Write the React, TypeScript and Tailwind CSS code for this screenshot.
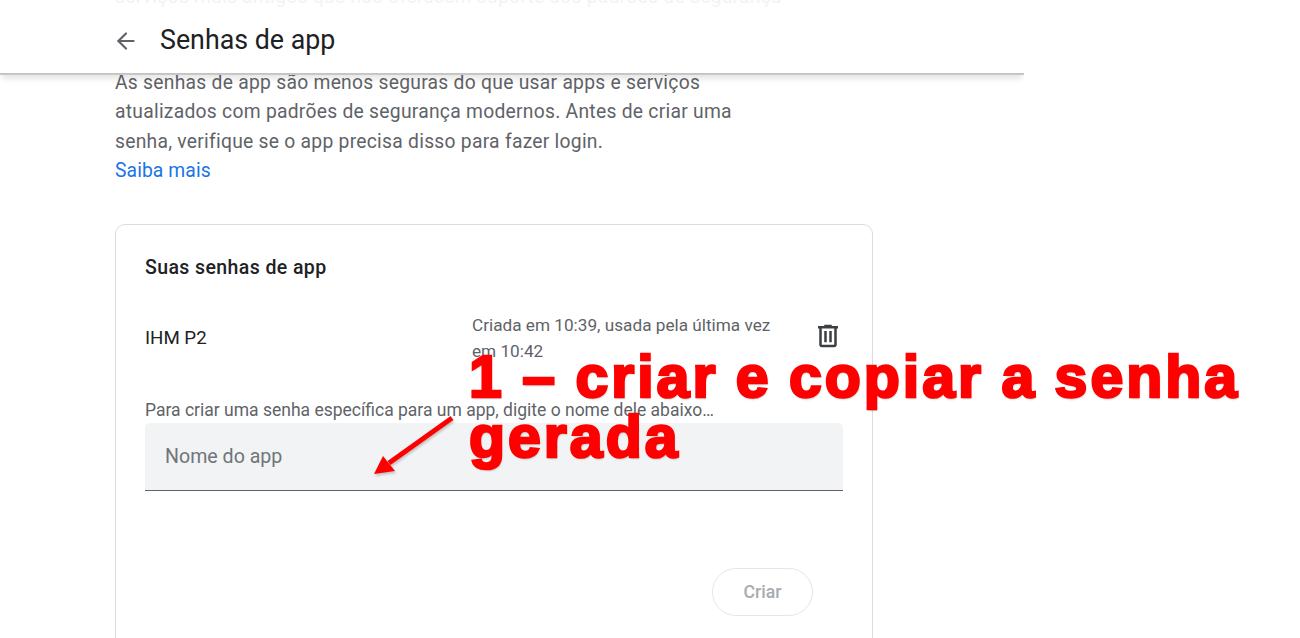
import { ArrowLeft } from 'lucide-react';

function TrashIcon() {
  return (
    <svg viewBox="0 0 24 24" className="h-[30px] w-[30px]" fill="#3c4043">
      <path d="M15 4V3H9v1H4v2h1v13c0 1.1.9 2 2 2h10c1.1 0 2-.9 2-2V6h1V4h-5zm2 15H7V6h10v13z" />
      <path d="M9 8h2v9H9zm4 0h2v9h-2z" />
    </svg>
  );
}

function Annotation() {
  return (
    <div className="absolute left-[469px] top-[347px] text-[59px] leading-[60px] font-bold text-[#ff0000] [font-family:'Liberation_Sans',sans-serif] [text-shadow:1px_2px_2px_rgba(0,0,0,0.2)] [-webkit-text-stroke:2.6px_#ff0000]">
      <div className="whitespace-nowrap tracking-[3px] [word-spacing:-2px]">1 – criar e copiar a senha</div>
      <div className="whitespace-nowrap tracking-[3px]">gerada</div>
    </div>
  );
}

function Arrow() {
  return (
    <svg className="absolute left-[370px] top-[415px] h-[64px] w-[90px] [filter:drop-shadow(1px_2px_1px_rgba(0,0,0,0.2))]" viewBox="0 0 90 64">
      <line x1="82" y1="3" x2="19" y2="48" stroke="#ff0000" strokeWidth="5" />
      <polygon points="4,59 13,41 25,56" fill="#ff0000" />
    </svg>
  );
}

export default function App() {
  return (
    <div className="relative h-[638px] w-[1300px] overflow-hidden bg-white [font-family:Roboto,sans-serif]">
      {/* page content, scrolled under the header */}
      <main className="pl-[115px] pt-[68px]">
        <div className="w-[640px] text-[19.3px] leading-[29.3px] tracking-[0.26px] text-[#5f6368]">
          <p>
            As senhas de app são menos seguras do que usar apps e serviços atualizados com padrões de segurança modernos. Antes de criar uma senha, verifique se o app precisa disso para fazer login.
          </p>
          <a className="tracking-[0.1px] text-[#1a73e8]">Saiba mais</a>
        </div>

        <section className="mt-[39px] h-[500px] w-[758px] rounded-[10px] border border-[#dadce0] px-[29px] pt-[30px]">
          <h2 className="text-[19.5px] leading-[26px] font-medium tracking-[0.4px] text-[#202124]">Suas senhas de app</h2>

          <div className="mt-[32px] flex items-start">
            <div className="w-[327px] pt-[12px] text-[18.7px] leading-[26px] text-[#202124]">IHM P2</div>
            <div className="w-[310px] text-[17.2px] leading-[25.5px] text-[#5f6368]">
              Criada em 10:39, usada pela última vez em 10:42
            </div>
            <div className="ml-[31px] pt-[8px]">
              <TrashIcon />
            </div>
          </div>

          <p className="mt-[34px] whitespace-nowrap text-[17.5px] leading-[24px] text-[#5f6368]">
            Para criar uma senha específica para um app, digite o nome dele abaixo…
          </p>

          <div className="mt-[1px] flex h-[68px] w-[698px] items-center rounded-t-[5px] border-b border-[#5f6368] bg-[#f1f3f4] pl-[20px] text-[19.6px] text-[#70757a]">
            Nome do app
          </div>

          <div className="mt-[77px] flex w-[668px] justify-end">
            <div className="flex h-[48px] w-[101px] items-center justify-center rounded-full border border-[#e6e6e6] text-[17.6px] font-medium text-[#a8abaf]">
              Criar
            </div>
          </div>
        </section>
      </main>

      {/* leftover of the line scrolled past, fading out at the very top */}
      <div className="absolute left-[115px] top-[-15px] whitespace-nowrap text-[19.4px] leading-[24px] tracking-[0.2px] text-[#f3f3f3]">
        serviços mais antigos que não oferecem suporte aos padrões de segurança
      </div>

      {/* sticky header */}
      <header className="absolute left-0 top-[8px] flex h-[65px] w-[1024px] items-center bg-white shadow-[0_1px_0_#c4c4c4,0_2px_0_#c8c8c8,0_8px_6px_-2px_rgba(0,0,0,0.1)] [clip-path:inset(0_0_-14px_0)]">
        <ArrowLeft className="ml-[113px] h-[26px] w-[26px] text-[#5f6368]" strokeWidth={2} />
        <h1 className="ml-[21px] text-[26.8px] text-[#202124]">Senhas de app</h1>
      </header>

      <Arrow />
      <Annotation />
    </div>
  );
}
